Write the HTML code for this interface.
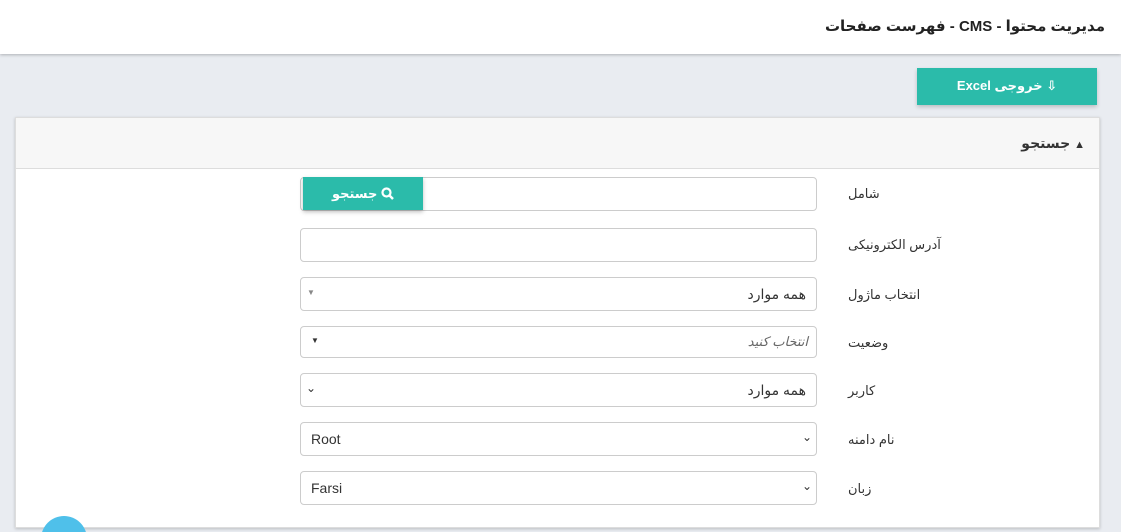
<!DOCTYPE html>
<html><head><meta charset="utf-8"><style>
*{box-sizing:border-box;margin:0;padding:0}
html{width:1126px;height:532px;overflow:hidden}
body{width:1126px;height:532px;overflow:hidden;background:#e9ecf1;font-family:"Liberation Sans","DejaVu Sans",sans-serif;position:relative;font-size:13px;color:#333}
.hdr{position:absolute;left:0;top:0;width:1121px;height:54px;background:#fff;box-shadow:0 1px 3px rgba(0,0,0,.25)}
.hdr span{position:absolute;right:16px;top:17px;font-size:15px;font-weight:bold;color:#222;direction:rtl}
.rbar{position:absolute;left:1121px;top:0;width:5px;height:532px;background:#fff}
.xl{position:absolute;left:917px;top:68px;width:180px;height:37px;background:#2bbbaa;color:#fff;font-weight:bold;font-size:13px;text-align:center;line-height:36px;box-shadow:0 2px 4px rgba(0,0,0,.2)}
.panel{position:absolute;left:15px;top:117px;width:1085px;height:411px;background:#fff;border:1px solid #ddd;box-shadow:0 1px 3px rgba(0,0,0,.2)}
.ph{height:51px;background:#f7f7f7;border-bottom:1px solid #ddd;position:relative}
.ph span{position:absolute;right:14px;top:17px;font-size:14px;font-weight:bold;direction:rtl}
.lbl{position:absolute;left:848px;font-size:13px;direction:rtl;white-space:nowrap}
.in{position:absolute;left:300px;width:517px;border:1px solid #ccc;border-radius:4px;background:#fff;font-size:14px}
.btn{position:absolute;left:303px;top:177px;width:120px;height:33px;background:#2bbbaa;color:#fff;font-weight:bold;text-align:center;line-height:33px;box-shadow:0 2px 4px rgba(0,0,0,.25)}
.cw{position:absolute;left:41px;top:516px;width:46px;height:16px;overflow:hidden}
.circ{width:46px;height:46px;border-radius:50%;background:#4fc0ea}
</style></head><body>
<div class="hdr"><span>مدیریت محتوا - CMS - فهرست صفحات</span></div>
<div class="rbar"></div>
<div class="xl"><span dir="rtl"><b>⇩</b> خروجی Excel</span></div>
<div class="panel"><div class="ph"><span><span style="position:static;font-size:11px">▲</span> جستجو</span></div></div>

<div class="in" style="top:177px;height:34px"></div>
<div class="btn"><span dir="rtl"><svg width="13" height="13" viewBox="0 0 13 13" style="vertical-align:-2px"><circle cx="5.5" cy="5.5" r="4" fill="none" stroke="#fff" stroke-width="2.2"/><path d="M8.5 8.5L12 12" stroke="#fff" stroke-width="2.5"/></svg> جستجو</span></div>
<div class="lbl" style="top:186px">شامل</div>

<div class="in" style="top:228px;height:34px"></div>
<div class="lbl" style="top:237px">آدرس الکترونیکی</div>

<div class="in" style="top:277px;height:34px"><span style="position:absolute;right:10px;top:8px;direction:rtl">همه موارد</span><span style="position:absolute;left:6px;top:10px;font-size:8px;color:#888">▼</span></div>
<div class="lbl" style="top:287px">انتخاب ماژول</div>

<div class="in" style="top:326px;height:32px"><span style="position:absolute;right:8px;top:7px;direction:rtl;font-style:italic;color:#666;font-size:13px">انتخاب کنید</span><span style="position:absolute;left:10px;top:9px;font-size:8px;color:#333">▼</span></div>
<div class="lbl" style="top:335px">وضعیت</div>

<div class="in" style="top:373px;height:34px"><span style="position:absolute;right:10px;top:8px;direction:rtl">همه موارد</span><span style="position:absolute;left:5px;top:7px;font-size:12px;color:#333">⌄</span></div>
<div class="lbl" style="top:383px">کاربر</div>

<div class="in" style="top:422px;height:34px"><span style="position:absolute;left:10px;top:8px">Root</span><span style="position:absolute;right:4px;top:7px;font-size:12px">⌄</span></div>
<div class="lbl" style="top:432px">نام دامنه</div>

<div class="in" style="top:471px;height:34px"><span style="position:absolute;left:10px;top:8px">Farsi</span><span style="position:absolute;right:4px;top:7px;font-size:12px">⌄</span></div>
<div class="lbl" style="top:481px">زبان</div>

<div class="cw"><div class="circ"></div></div>
</body></html>
